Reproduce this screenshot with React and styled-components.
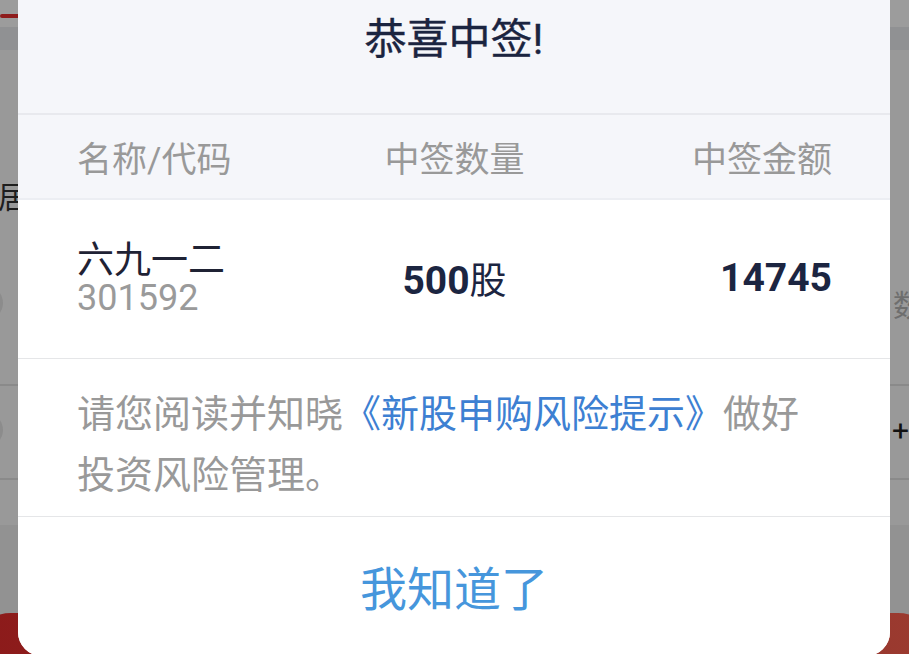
import React from "react";
import styled, { createGlobalStyle } from "styled-components";

const GlobalStyle = createGlobalStyle`
  html, body {
    margin: 0;
    padding: 0;
    background: #999999;
    font-family: Roboto, "Noto Sans CJK SC", "Noto Sans", sans-serif;
  }
`;

// 背景页（被遮罩压暗）
const Page = styled.div`
  position: relative;
  width: 909px;
  height: 654px;
  overflow: hidden;
  background: #999999;
  display: flex;
  flex-direction: column;
`;

const TopBar = styled.div`
  height: 50px;
  display: flex;
  flex-direction: column;
  background: #9c9c9c;
`;

const TopStrip = styled.div`
  height: 27px;
  display: flex;
  align-items: center;
`;

const RedMark = styled.div`
  width: 20px;
  height: 4px;
  margin-top: 4px;
  border-radius: 2px;
  background: #8e1c1c;
`;

const TopShade = styled.div`
  flex: 1;
  background: #909193;
`;

const BgRow = styled.div`
  height: ${(p) => p.h}px;
  flex-shrink: 0;
  display: flex;
  justify-content: space-between;
  align-items: center;
  border-bottom: ${(p) => (p.line ? "2px solid #8a8a8a" : "none")};
`;

const BgText = styled.span`
  font-size: 30px;
  color: ${(p) => p.color || "#1e1e1e"};
  margin: 0 ${(p) => p.mr || 0}px 0 ${(p) => p.ml || 0}px;
`;

const BgCircle = styled.div`
  width: 34px;
  height: 34px;
  margin-left: -31px;
  border-radius: 50%;
  background: #8c8c8c;
`;

const BgBottom = styled.div`
  flex: 1;
  display: flex;
  flex-direction: column;
  justify-content: flex-end;
  background: #929292;
`;

const RedButton = styled.div`
  height: 41px;
  margin: 0 -30px;
  border-radius: 60px 60px 0 0;
  background: linear-gradient(90deg, #8c1a1a, #9b3b30);
`;

// 中签弹窗
const Modal = styled.div`
  position: absolute;
  left: 18px;
  right: 19px;
  top: -30px;
  bottom: -2px;
  background: #ffffff;
  border-radius: 0 0 24px 24px;
  display: flex;
  flex-direction: column;
  overflow: hidden;
`;

const Header = styled.div`
  height: 145px;
  flex-shrink: 0;
  box-sizing: border-box;
  padding-top: 48px;
  background: #f5f6fa;
  border-bottom: 2px solid #e8e9ee;
  text-align: center;
`;

const Title = styled.h2`
  margin: 0;
  font-size: 42px;
  line-height: 44px;
  font-weight: 400;
  color: #1b2440;
  -webkit-text-stroke: 0.4px #1b2440;
`;

const Grid = styled.div`
  display: grid;
  flex-shrink: 0;
  grid-template-columns: 1fr auto 1fr;
  align-items: center;
  padding: 0 58px 0 59px;
  box-sizing: border-box;
`;

const TableHead = styled(Grid)`
  height: 85px;
  background: #f5f6fa;
  border-bottom: 2px solid #eceef3;
`;

const Label = styled.span`
  font-size: 35px;
  color: #999999;
  justify-self: ${(p) => p.align || "start"};
`;

const DataRow = styled(Grid)`
  height: 159px;
  border-bottom: 1px solid #e5e6e8;
`;

const NameBlock = styled.div`
  display: flex;
  flex-direction: column;
  justify-self: start;
`;

const Name = styled.span`
  font-size: 37px;
  line-height: 38px;
  color: #1f2234;
`;

const Code = styled.span`
  font-size: 36px;
  line-height: 36px;
  color: #9a9a9a;
`;

const Value = styled.span`
  font-size: 39px;
  font-weight: 700;
  color: #1c2541;
  margin-bottom: 3px;
  justify-self: ${(p) => p.align || "center"};
`;

const Unit = styled.span`
  font-size: 37px;
  font-weight: 400;
`;

const Notice = styled.p`
  margin: 0;
  height: 158px;
  flex-shrink: 0;
  box-sizing: border-box;
  padding: 25px 58px 0 59px;
  font-size: 38px;
  line-height: 61px;
  color: #999999;
  border-bottom: 1px solid #e5e6e8;
`;

const Link = styled.a`
  color: #3d80d2;
  text-decoration: none;
`;

const Confirm = styled.button`
  flex: 1;
  border: none;
  background: #ffffff;
  font-family: inherit;
  font-size: 47px;
  color: #4696dc;
  padding: 0 0 2px;
  cursor: pointer;
`;

export default function App() {
  return (
    <>
      <GlobalStyle />
      <Page>
        <TopBar>
          <TopStrip>
            <RedMark />
          </TopStrip>
          <TopShade />
        </TopBar>
        <BgRow h={120} />
        <BgRow h={50}>
          <BgText ml={-2}>居</BgText>
        </BgRow>
        <BgRow h={55} />
        <BgRow h={55}>
          <BgCircle />
          <BgText color="#6e6e6e" mr={-14}>数</BgText>
        </BgRow>
        <BgRow h={54} line />
        <BgRow h={88}>
          <BgCircle />
          <BgText color="#111">+</BgText>
        </BgRow>
        <BgRow h={4} line />
        <BgRow h={45} />
        <BgBottom>
          <RedButton />
        </BgBottom>

        <Modal>
          <Header>
            <Title>恭喜中签!</Title>
          </Header>
          <TableHead>
            <Label>名称/代码</Label>
            <Label align="center">中签数量</Label>
            <Label align="end">中签金额</Label>
          </TableHead>
          <DataRow>
            <NameBlock>
              <Name>六九一二</Name>
              <Code>301592</Code>
            </NameBlock>
            <Value>
              500<Unit>股</Unit>
            </Value>
            <Value align="end">14745</Value>
          </DataRow>
          <Notice>
            请您阅读并知晓<Link href="#">《新股申购风险提示》</Link>做好投资风险管理。
          </Notice>
          <Confirm>我知道了</Confirm>
        </Modal>
      </Page>
    </>
  );
}
